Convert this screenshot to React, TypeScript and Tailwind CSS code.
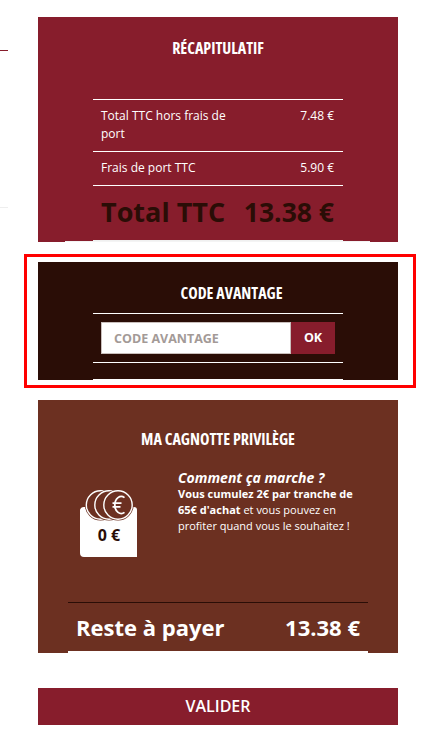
const openSans = 'font-["Open_Sans",sans-serif]';

function CoinPocket() {
  return (
    <div className="relative w-[60px] h-[67px] shrink-0">
      <svg width="60" height="67" viewBox="0 0 60 67" className="block">
        <path d="M1 20a4 4 0 0 1 4-3h50a3 3 0 0 1 3 3v47H5a4 4 0 0 1-4-4z" fill="#fff" />
        {[21.5, 30, 39].map((cx) => (
          <g key={cx}>
            <circle cx={cx} cy="15" r="15.6" fill="#6c3021" />
            <circle cx={cx} cy="15" r="14.2" fill="#6c3021" stroke="#fff" strokeWidth="1.4" />
          </g>
        ))}
        <path d="M45.5 7.6A6.5 8.5 0 1 0 45.5 22.4M33.5 13.2h9M33.5 16.8h8" fill="none" stroke="#fff" strokeWidth="1.8" />
      </svg>
      <span className={`absolute left-0 right-0 top-[36px] text-center text-[16px] leading-[18px] font-bold text-[#2a0d06] ${openSans}`}>0 €</span>
    </div>
  );
}

export default function App() {
  return (
    <div className={`relative w-[445px] h-[734px] overflow-hidden bg-white pt-[17px] pl-[38px] ${openSans}`}>
      {/* stubs of the neighbouring column */}
      <div className="absolute left-0 top-[50px] w-[8px] h-px bg-[#871d2c]" />
      <div className="absolute left-0 top-[207px] w-[8px] h-px bg-[#eeeeee]" />

      <div className="w-[360px] flex flex-col">
        {/* Recap */}
        <section className="relative h-[225px] bg-[#871d2c] text-white flex flex-col items-center">
          <h2 className="mt-[20px] h-[22px] text-[16px] leading-[22px] font-bold [font-stretch:75%]">RÉCAPITULATIF</h2>
          <div className="mt-[40px] w-[250px] text-[12px] leading-[18px]">
            <div className="flex justify-between border-t border-white pt-[7px] pb-[8px] pl-[8px] pr-[9px] h-[52px]">
              <span className="w-[140px]">Total TTC hors frais de port</span>
              <span>7.48 €</span>
            </div>
            <div className="flex justify-between border-t border-white pt-[7px] pl-[8px] pr-[9px] h-[34px]">
              <span>Frais de port TTC</span>
              <span>5.90 €</span>
            </div>
            <div className="flex justify-between border-t border-white pl-[8px] pr-[9px] h-[54px] pb-[2px] items-center text-[#2a0d06] text-[27px] leading-[36px] font-bold">
              <span>Total TTC</span>
              <span className="text-[26.5px]">13.38 €</span>
            </div>
          </div>
          <div className="absolute left-[55px] w-[250px] bottom-0 h-[2px] bg-[#f0f0f0]" />
          <div className="absolute left-[27px] right-[28px] bottom-0 h-px bg-[#f4f4f4]" />
        </section>

        {/* Code */}
        <section className="relative mt-[20px] h-[118px] bg-[#2a0d06] text-white flex flex-col items-center">
          <h2 className="mt-[20px] ml-[27px] h-[22px] text-[16px] leading-[22px] font-bold [font-stretch:75%]">CODE AVANTAGE</h2>
          <div className="mt-[9px] w-[250px] h-[50px] border-y border-white flex items-center justify-center">
            <div className="w-[234px] h-[32px] flex">
              <input
                placeholder="CODE AVANTAGE"
                className="w-[190px] h-full bg-white border border-[#c9bfbc] pl-[12px] text-[12.5px] font-bold outline-none placeholder:text-[#a39a97]"
              />
              <button className="flex-1 bg-[#871d2c] text-white text-[12.5px] font-bold">OK</button>
            </div>
          </div>
          <div className="absolute left-[55px] w-[250px] bottom-0 h-px bg-white" />
          <div className="absolute -left-[14px] -right-[18px] -top-[8px] -bottom-[8px] border-[3px] border-[#ff0000] pointer-events-none" />
        </section>

        {/* Cagnotte */}
        <section className="mt-[20px] h-[253px] bg-[#6c3021] text-white flex flex-col items-center">
          <h2 className="mt-[28px] h-[22px] text-[16px] leading-[22px] font-bold [font-stretch:75%]">MA CAGNOTTE PRIVILÈGE</h2>
          <div className="mt-[20px] w-full flex">
            <div className="ml-[41px] mt-[20px]">
              <CoinPocket />
            </div>
            <div className="ml-[39px] w-[190px]">
              <p className="text-[14px] leading-[16px] font-bold italic whitespace-nowrap">Comment ça marche ?</p>
              <p className="text-[11px] leading-[16px]">
                <strong>Vous cumulez 2€ par tranche de 65€ d'achat</strong> et vous pouvez en profiter quand vous le souhaitez !
              </p>
            </div>
          </div>
          <div className="mt-auto w-[300px] h-[51px] border-t border-[#2a0d06] border-b-2 border-b-white px-[8px] pb-[1px] flex justify-between items-center text-[22px] leading-[30px] font-bold">
            <span>Reste à payer</span>
            <span>13.38 €</span>
          </div>
        </section>

        <button className="mt-[35px] h-[37px] pb-[1px] bg-[#871d2c] text-white text-[16px] font-semibold">VALIDER</button>
      </div>
    </div>
  );
}
